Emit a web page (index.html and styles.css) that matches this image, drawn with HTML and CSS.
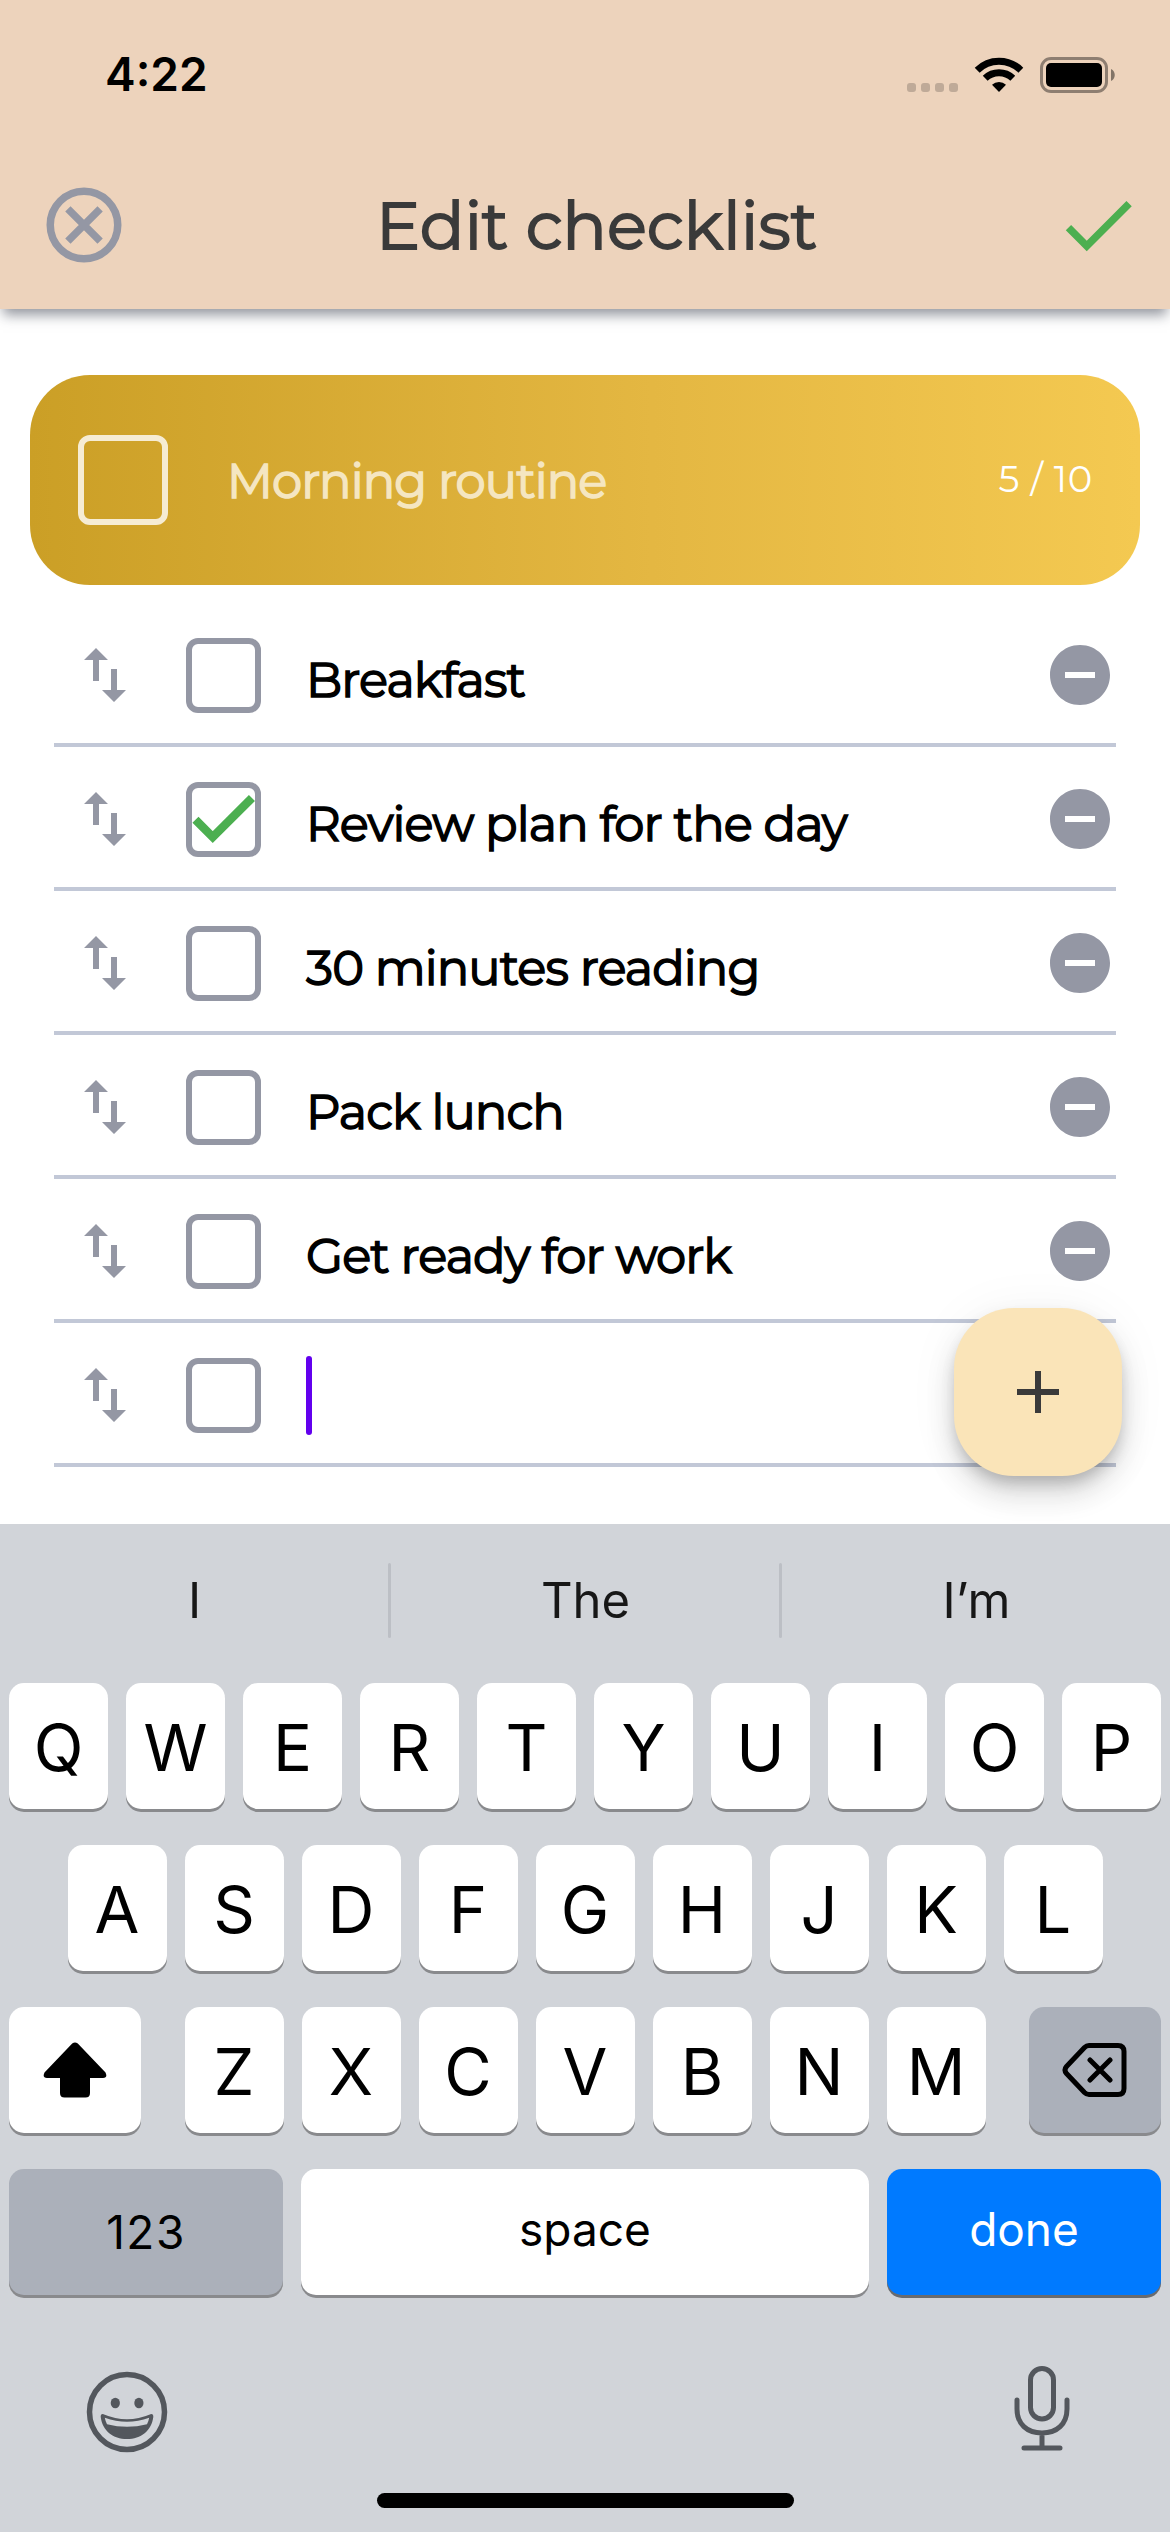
FILE: index.html
```html
<!DOCTYPE html>
<html lang="en">
<head>
<meta charset="utf-8">
<title>Edit checklist</title>
<link rel="stylesheet" href="styles.css">
</head>
<body>
<svg class="sprite" aria-hidden="true">
  <symbol id="swap" viewBox="0 0 24 24"><path d="M16 17.01V10h-2v7.01h-3L15 21l4-3.99h-3zM9 3L5 6.99h3V14h2V6.99h3L9 3z"/></symbol>
  <symbol id="check" viewBox="0 0 24 24"><path d="M9 16.17L4.83 12l-1.42 1.41L9 19 21 7l-1.41-1.41z"/></symbol>
  <symbol id="remove" viewBox="0 0 24 24"><path d="M12 2C6.48 2 2 6.48 2 12s4.48 10 10 10 10-4.48 10-10S17.52 2 12 2zm5 11H7v-2h10v2z"/></symbol>
</svg>
<div class="screen">
  <header class="header">
    <div class="status">
      <span class="time">4:22</span>
      <div class="status-icons">
        <div class="dots"><i></i><i></i><i></i><i></i></div>
        <svg class="wifi" width="50" height="36" viewBox="0 0 50 36">
          <path fill="none" stroke="#000" stroke-width="7" d="M3.2 14.2a31 31 0 0 1 43.6 0"/>
          <path fill="none" stroke="#000" stroke-width="7" d="M11.2 22.2a20 20 0 0 1 27.6 0"/>
          <path d="M25 36l-7-7.2a10.2 10.2 0 0 1 14 0z"/>
        </svg>
        <svg width="76" height="36" viewBox="0 0 76 36">
          <rect x="1.5" y="1.5" width="65" height="33" rx="9.5" fill="none" stroke="#000" stroke-opacity=".4" stroke-width="3"/>
          <rect x="6" y="6" width="56" height="24" rx="5"/>
          <path fill-opacity=".45" d="M71 12c5 2 5 10 0 12z"/>
        </svg>
      </div>
    </div>
    <div class="toolbar">
      <svg class="icon-lg gray-line" viewBox="0 0 24 24"><circle cx="12" cy="12" r="9"/><path d="M7.7 7.7l8.6 8.6M16.3 7.7l-8.6 8.6"/></svg>
      <h1 class="title">Edit checklist</h1>
      <svg class="icon-lg green"><use href="#check"/></svg>
    </div>
  </header>

  <main class="content">
    <section class="card">
      <span class="box box-lg"></span>
      <span class="card-title">Morning routine</span>
      <span class="count">5 / 10</span>
    </section>
    <ul class="list">
      <li class="row"><svg class="icon"><use href="#swap"/></svg><span class="box"></span><span class="label">Breakfast</span><svg class="icon"><use href="#remove"/></svg></li>
      <li class="row"><svg class="icon"><use href="#swap"/></svg><span class="box"><svg class="tick green"><use href="#check"/></svg></span><span class="label">Review plan for the day</span><svg class="icon"><use href="#remove"/></svg></li>
      <li class="row"><svg class="icon"><use href="#swap"/></svg><span class="box"></span><span class="label">30 minutes reading</span><svg class="icon"><use href="#remove"/></svg></li>
      <li class="row"><svg class="icon"><use href="#swap"/></svg><span class="box"></span><span class="label">Pack lunch</span><svg class="icon"><use href="#remove"/></svg></li>
      <li class="row"><svg class="icon"><use href="#swap"/></svg><span class="box"></span><span class="label">Get ready for work</span><svg class="icon"><use href="#remove"/></svg></li>
      <li class="row"><svg class="icon"><use href="#swap"/></svg><span class="box"></span><span class="caret"></span></li>
    </ul>
    <div class="fab"><svg width="42" height="42" viewBox="0 0 42 42"><path d="M21 0v42M0 21h42"/></svg></div>
  </main>

  <section class="keyboard">
    <div class="suggestions">
      <span class="word">I</span><i class="sep"></i><span class="word">The</span><i class="sep"></i><span class="word">I’m</span>
    </div>
    <div class="keys">
      <div class="key-row"><b class="key">Q</b><b class="key">W</b><b class="key">E</b><b class="key">R</b><b class="key">T</b><b class="key">Y</b><b class="key">U</b><b class="key">I</b><b class="key">O</b><b class="key">P</b></div>
      <div class="key-row"><b class="key">A</b><b class="key">S</b><b class="key">D</b><b class="key">F</b><b class="key">G</b><b class="key">H</b><b class="key">J</b><b class="key">K</b><b class="key">L</b></div>
      <div class="key-row spread">
        <b class="key key-side"><svg width="64" height="56" viewBox="0 0 64 56"><path d="M29.2 1.6Q32 -.8 34.8 1.6L62.5 30.4Q65 36 60 36H47V51Q47 55.500 42.500 55.500H21.500Q17 55.500 17 51V36H4Q-1 36 1.500 30.400Z"/></svg></b>
        <div class="letters"><b class="key">Z</b><b class="key">X</b><b class="key">C</b><b class="key">V</b><b class="key">B</b><b class="key">N</b><b class="key">M</b></div>
        <b class="key key-side key-gray"><svg class="delete" width="66" height="56" viewBox="0 0 66 56"><path d="M27 3.500H56Q62 3.500 62 9.500V46.500Q62 52.500 56 52.500H27Q24.500 52.500 22.500 50.500L4.500 31.500Q1.500 28 4.500 24.500L22.500 5.500Q24.500 3.500 27 3.500ZM28 18L48 38M48 18L28 38"/></svg></b>
      </div>
      <div class="key-row spread">
        <b class="key key-text key-fn key-gray key-num">123</b>
        <b class="key key-text key-space">space</b>
        <b class="key key-text key-fn key-done">done</b>
      </div>
    </div>
    <div class="tools">
      <svg class="emoji" width="82" height="82" viewBox="0 0 82 82">
        <circle cx="41" cy="41" r="37.500" fill="none" stroke="#53575d" stroke-width="5.500"/>
        <ellipse cx="29.300" cy="32" rx="4.600" ry="5.300"/><ellipse cx="52.900" cy="32" rx="4.600" ry="5.300"/>
        <path fill-rule="evenodd" d="M17.500 43.200Q41 53.200 64.500 43.200Q67.500 42.600 67.300 46C65.500 60 55 68 41 68S16.500 60 14.700 46Q14.500 42.600 17.500 43.200ZM18.800 46.800Q19.500 50.500 21 53.300Q41 58.400 61 53.300Q62.500 50.500 63.200 46.800Q41 54.800 18.800 46.800Z"/>
      </svg>
      <svg class="mic" width="58" height="86" viewBox="0 0 58 86"><rect x="17.500" y="3.500" width="23" height="50.500" rx="11.500"/><path d="M4 35v9C4 59 14 68 29 68S54 59 54 44v-9M29 68v15M11 83H47"/></svg>
    </div>
    <div class="home"></div>
  </section>
</div>
</body>
</html>
```
FILE: styles.css
```css
* { box-sizing: border-box; }

body {
  margin: 0;
  background: #fff;
  font-family: Inter, "Liberation Sans", sans-serif;
}

svg { display: block; flex: none; }
.sprite { position: absolute; width: 0; height: 0; }

.screen {
  display: flex;
  flex-direction: column;
  width: 1170px;
  height: 2532px;
  overflow: hidden;
}

/* Header */
.header {
  height: 309px;
  background: #edd3bc;
  box-shadow: 0 9px 12px -3px rgba(60, 66, 80, .55);
}

.status {
  display: flex;
  justify-content: space-between;
  align-items: center;
  height: 141px;
  padding: 7px 54px 0 105px;
}

.time { font-size: 46px; font-weight: 600; line-height: 56px; }
.status-icons { display: flex; align-items: flex-end; }
.dots { display: flex; gap: 5px; margin: 0 16px 1px 0; }
.dots i { width: 9px; height: 9px; border-radius: 3px; background: #bfaa98; }
.wifi { margin: 0 16px 1px 0; }

.toolbar {
  display: flex;
  align-items: center;
  height: 168px;
  padding: 0 27px 0 39px;
}

.icon-lg { width: 90px; height: 90px; }
.gray-line { fill: none; stroke: #9497a4; stroke-width: 2; }
.green { fill: #4caf50; }

.title {
  flex: 1;
  margin: 0;
  padding: 2px 0 0 247px;
  color: #3a3a3a;
  font-family: Montserrat, Inter, sans-serif;
  font-size: 66px;
  font-weight: 400;
  line-height: 80px;
  white-space: nowrap;
  -webkit-text-stroke: 1.8px #3a3a3a;
}

/* Checklist */
.content { position: relative; flex: 1; padding-top: 66px; }

.card {
  display: flex;
  align-items: center;
  height: 210px;
  margin: 0 30px;
  padding: 0 47px 0 48px;
  border-radius: 60px;
  background: linear-gradient(90deg, #cb9f26, #e4b742 56%, #f4c951);
  font-family: Montserrat, Inter, sans-serif;
}

.box {
  flex: none;
  display: flex;
  align-items: center;
  justify-content: center;
  width: 75px;
  height: 75px;
  border: 6px solid #9497a4;
  border-radius: 12px;
}

.box-lg { width: 90px; height: 90px; border-color: #f6ecd3; }

.card-title {
  flex: 1;
  padding: 2px 0 0 59px;
  color: #f5e6c1;
  font-size: 48px;
  font-weight: 400;
  line-height: 60px;
  letter-spacing: -.9px;
  -webkit-text-stroke: 1.5px #f5e6c1;
}

.count {
  padding-bottom: 2px;
  color: #fff;
  font-size: 37px;
  line-height: 44px;
  letter-spacing: .65px;
}

.list { margin: 18px 54px 0; padding: 0; list-style: none; }

.row {
  display: flex;
  align-items: center;
  height: 144px;
  padding-left: 15px;
  box-shadow: inset 0 -4px #c2c8d7;
}

.icon { width: 72px; height: 72px; fill: #9497a4; }
.row .box { margin-left: 45px; }
.tick { width: 82px; height: 82px; margin: -2px 2px 0 0; stroke: #4caf50; stroke-width: .5px; }

.label {
  flex: 1;
  padding: 9px 0 0 45px;
  font-family: Montserrat, Inter, sans-serif;
  font-size: 48px;
  font-weight: 400;
  line-height: 58px;
  letter-spacing: -.9px;
  -webkit-text-stroke: 1.5px #000;
}

.caret {
  width: 6px;
  height: 79px;
  margin-left: 45px;
  border-radius: 3px;
  background: #6200ee;
}

.fab {
  position: absolute;
  right: 48px;
  bottom: 48px;
  display: flex;
  align-items: center;
  justify-content: center;
  width: 168px;
  height: 168px;
  border-radius: 60px;
  background: #fae4b8;
  box-shadow: 0 9px 15px -3px rgba(0, 0, 0, .2), 0 18px 30px rgba(0, 0, 0, .14), 0 3px 54px rgba(0, 0, 0, .05);
}

.fab path { stroke: #3a3a3a; stroke-width: 6; }

/* Keyboard */
.keyboard {
  position: relative;
  display: flex;
  flex-direction: column;
  height: 1008px;
  background: #d1d4d9;
}

.suggestions { display: flex; align-items: center; height: 153px; }
.word { flex: 1; padding-left: 1px; color: #171717; font-size: 49px; line-height: 60px; text-align: center; }
.sep { width: 3px; height: 75px; border-radius: 2px; background: #bcbfc5; }

.keys { display: flex; flex-direction: column; gap: 36px; padding: 6px 9px 0; }
.key-row, .letters { display: flex; justify-content: center; gap: 18px; }
.spread { justify-content: space-between; }

.key {
  display: flex;
  align-items: center;
  justify-content: center;
  width: 99px;
  height: 126px;
  padding-top: 3px;
  border-radius: 15px;
  background: #fff;
  box-shadow: 0 3px #898a8d;
  font-size: 65px;
  font-weight: 400;
}

.key-side { width: 132px; padding-top: 0; }
.key-gray { background: #abb0ba; }
.key-text { padding: 0 0 7px; font-size: 46px; }
.key-fn { width: 274px; }
.key-num { padding: 0; letter-spacing: 1.5px; }
.key-space { width: 568px; }
.key-done { background: #007aff; color: #fff; box-shadow: 0 3px #686b70; }

.delete path {
  fill: none;
  stroke: #000;
  stroke-width: 5;
  stroke-linecap: round;
  stroke-linejoin: round;
}

.tools {
  display: flex;
  justify-content: space-between;
  align-items: center;
  height: 86px;
  margin-top: 70px;
  padding: 0 99px 0 86px;
  fill: #53575d;
}

.emoji { margin-top: 8px; }
.mic { fill: none; stroke: #53575d; stroke-width: 5; stroke-linecap: round; }

.home {
  width: 417px;
  height: 15px;
  margin: auto auto 24px;
  border-radius: 8px;
  background: #000;
}
```
